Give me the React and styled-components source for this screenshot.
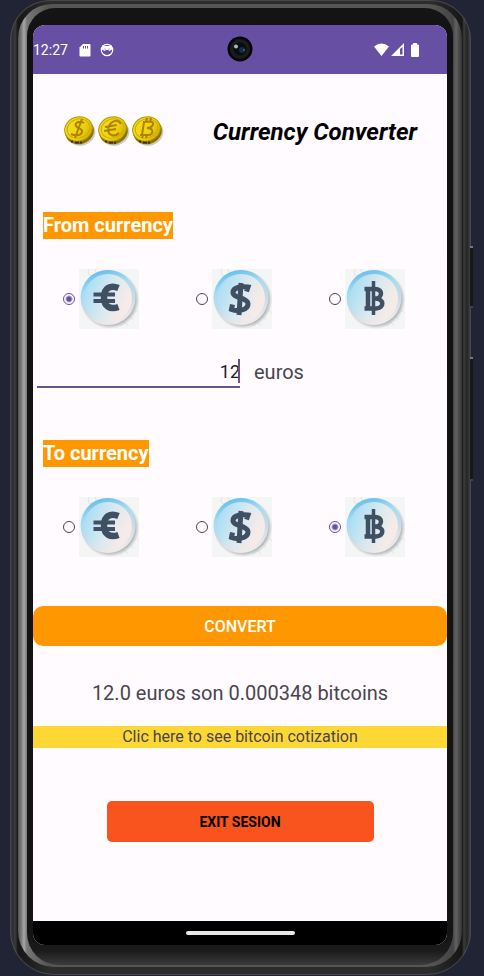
import React, { useState } from "react";
import styled, { createGlobalStyle } from "styled-components";

const GlobalStyle = createGlobalStyle`
  * { box-sizing: border-box; }
  body {
    margin: 0;
    background: #202434;
    font-family: Roboto, "Liberation Sans", sans-serif;
    color: #49454f;
  }
`;

const Desk = styled.main`
  padding: 0 13px 0 10px;
`;

const Shell = styled.div`
  position: relative;
  padding: 4px 9px 8px 8px;
  border-radius: 40px 40px 44px 44px;
  background: linear-gradient(90deg, #3a3a3a 0, #2e2e2e 3px, #3c3c3c 5px, #161616 8px, #2c2c2c 40px, #2c2c2c calc(100% - 40px), #161616 calc(100% - 9px), #3c3c3c calc(100% - 7px), #242424 calc(100% - 4px), #484848 100%);
  box-shadow: inset 0 0 1px 1px #4b4b4b;
`;

const Rail = styled.div`
  padding: 4px 9px 2px 9px;
  border-radius: 34px 34px 36px 36px;
  background: linear-gradient(90deg, #555 0, #777 3px, #a6a6a6 6px, #777 9px, #555 30px, #555 calc(100% - 30px), #444 calc(100% - 9px), #626262 calc(100% - 6px), #333 100%);
`;

const Bezel = styled.div`
  padding: 17px 6px 20px;
  border-radius: 28px 28px 32px 32px;
  background: linear-gradient(#151515 0, #111 30px, #141414 calc(100% - 30px), #1b1b1b calc(100% - 14px), #3b3b3b 100%);
`;

const Screen = styled.div`
  overflow: hidden;
  border-radius: 12px;
  background: #fffbff;
`;

const SideKey = styled.span`
  position: absolute;
  right: -2px;
  top: ${(p) => p.$top}px;
  width: 3px;
  height: ${(p) => p.$height}px;
  background: #171717;
  border-top: 2px solid #777;
  border-bottom: 2px solid #444;
`;

const StatusBar = styled.header`
  position: relative;
  display: flex;
  align-items: center;
  gap: 11px;
  height: 49px;
  padding-right: 27px;
  background: #6750a4;
  color: #fff;
  font-size: 14px;
`;

const StatusIcons = styled.div`
  display: flex;
  align-items: center;
  gap: ${(p) => p.$gap}px;
  margin-left: ${(p) => (p.$end ? "auto" : "0")};
`;

const Camera = styled.span`
  position: absolute;
  left: 50%;
  top: 11px;
  width: 26px;
  height: 26px;
  margin-left: -13px;
`;

const AppBar = styled.div`
  display: flex;
  align-items: center;
  justify-content: space-between;
  height: 116px;
  padding: 0 30px;
`;

const Title = styled.h1`
  margin: 0;
  color: #000;
  font-size: 24px;
  line-height: 28px;
  font-style: italic;
  font-weight: 700;
`;

const Group = styled.fieldset`
  display: block;
  min-width: 0;
  margin: 0;
  margin-top: ${(p) => p.$space}px;
  padding: 0;
  border: 0;
`;

const Legend = styled.legend`
  margin-left: 10px;
  padding: 0;
  background: #ff9800;
  color: #fff;
  font-size: 20px;
  line-height: 27px;
  font-weight: 700;
`;

const Choices = styled.div`
  display: flex;
  justify-content: space-between;
  padding: 30px 42px 0 30px;
`;

const Choice = styled.label`
  display: flex;
  align-items: center;
  gap: 4px;
  cursor: pointer;

  svg { display: block; }
`;

const Radio = styled.input`
  appearance: none;
  width: 12px;
  height: 12px;
  margin: 0;
  border: 1px solid #49454f;
  border-radius: 50%;

  &:checked {
    border-color: #6750a4;
    background: radial-gradient(circle, #6750a4 0, #6750a4 2px, transparent 4px);
  }
`;

const AmountRow = styled.div`
  display: flex;
  align-items: center;
  gap: 14px;
  height: 60px;
  margin-top: 13px;
  padding-left: 4px;
`;

const AmountBox = styled.div`
  position: relative;
  flex: 0 1 203px;
  border-bottom: 2px solid #65558f;
`;

const AmountInput = styled.input`
  display: block;
  width: 100%;
  height: 30px;
  padding: 0;
  border: 0;
  outline: 0;
  background: none;
  color: #1c1b1f;
  font: 18px Roboto, "Liberation Sans", sans-serif;
  text-align: right;
`;

const Caret = styled.span`
  position: absolute;
  right: 0;
  top: 3px;
  width: 2px;
  height: 24px;
  background: #65558f;
`;

const Unit = styled.label`
  font-size: 20px;
  line-height: 28px;
`;

const ConvertButton = styled.button`
  display: block;
  width: 100%;
  height: 40px;
  margin-top: 49px;
  border: 0;
  border-radius: 10px;
  background: #ff9800;
  color: #fff;
  font: 500 16px Roboto, "Liberation Sans", sans-serif;
`;

const Result = styled.output`
  display: block;
  padding: 33px 0 19px;
  font-size: 20px;
  line-height: 28px;
  text-align: center;
`;

const QuoteLink = styled.a`
  display: block;
  background: #fdd835;
  color: #49454f;
  font-size: 16px;
  line-height: 22px;
  text-align: center;
  text-decoration: none;
`;

const ExitArea = styled.div`
  display: flex;
  justify-content: center;
  padding: 53px 0 79px;
`;

const ExitButton = styled.button`
  width: 267px;
  height: 41px;
  border: 0;
  border-radius: 5px;
  background: #f9531e;
  color: #000;
  font: 700 14px Roboto, "Liberation Sans", sans-serif;
`;

const NavBar = styled.footer`
  display: flex;
  justify-content: center;
  height: 24px;
  padding-top: 10px;
  background: #000;
`;

const HomeHandle = styled.span`
  width: 109px;
  height: 4px;
  border-radius: 2px;
  background: #e8e8e8;
`;

const SharedPaints = styled.svg`
  position: absolute;
  width: 0;
  height: 0;
`;

const CURRENCIES = ["euro", "dollar", "bitcoin"];

function BadgeDefs() {
  return (
    <SharedPaints aria-hidden="true">
      <defs>
        <linearGradient id="face" x1="0" y1="0.3" x2="1" y2="0.7">
          <stop offset="0.05" stopColor="#acdff5" />
          <stop offset="0.5" stopColor="#dbe9f0" />
          <stop offset="0.85" stopColor="#f6ebe7" />
        </linearGradient>
        <linearGradient id="rim" x1="0.35" y1="0" x2="0.65" y2="1">
          <stop offset="0" stopColor="#67bde8" />
          <stop offset="0.3" stopColor="#a4dcf4" />
          <stop offset="0.65" stopColor="#cbdce7" />
          <stop offset="1" stopColor="#f8ece8" />
        </linearGradient>
        <radialGradient id="shade">
          <stop offset="0.84" stopColor="#8a9299" stopOpacity="0.7" />
          <stop offset="1" stopColor="#a8adb1" stopOpacity="0" />
        </radialGradient>
        <linearGradient id="gold" x1="0" y1="0" x2="1" y2="1">
          <stop offset="0" stopColor="#f5e32a" />
          <stop offset="0.6" stopColor="#ecd00c" />
          <stop offset="1" stopColor="#c9a400" />
        </linearGradient>
      </defs>
    </SharedPaints>
  );
}

function CurrencyBadge({ kind }) {
  return (
    <svg width="60" height="60" viewBox="0 0 60 60" aria-hidden="true">
      <rect width="60" height="60" fill="#f4f5f5" />
      <g fill="none" stroke="#e3e5e6">
        <circle cx="13" cy="3" r="4" />
        <path d="M41 57l5-4 3 4M47 51l4-4 3 4M53 45l4-4 3 3" />
      </g>
      <circle cx="31" cy="30.5" r="29.5" fill="url(#shade)" />
      <circle cx="29" cy="28.5" r="27.5" fill="url(#rim)" />
      <circle cx="29" cy="29" r="24" fill="url(#face)" />
      {kind === "euro" && (
        <g fill="none" stroke="#3e5062">
          <path d="M39.5 19C31 15.500 25 19.500 25 28.500S31 41 39.500 38" strokeWidth="6.500" />
          <path d="M14.500 25.500h21.500M14.500 32h21.500" strokeWidth="4" />
        </g>
      )}
      {kind === "dollar" && (
        <g fill="none" stroke="#3e5062">
          <path d="M34.500 22.500L36 18C29 17 21 18.500 21 23.500C21 29.500 36 28.500 36 35C36 41 26 43 19.500 40.500L20.500 35.500" strokeWidth="5" />
          <path d="M29 14l-2 32" strokeWidth="5" />
        </g>
      )}
      {kind === "bitcoin" && (
        <g fill="none" stroke="#3e5062">
          <path d="M19.500 20H30C38.500 20 37.500 29.500 30 29.500C39.500 29.500 39.500 39.500 31 39.500H19.500M23 20v20" strokeWidth="4.500" />
          <path d="M28.500 12v34" strokeWidth="3.500" />
        </g>
      )}
    </svg>
  );
}

function Coins() {
  return (
    <svg width="102" height="36" viewBox="0 0 102 36" role="img" aria-label="Gold coins">
      {["dollar", "euro", "bitcoin"].map((kind, i) => (
        <g key={kind} transform={`translate(${i * 34} 0)`}>
          <ellipse cx="18" cy="19" rx="14.5" ry="12.5" fill="#ccc8c1" transform="rotate(-18 18 19)" />
          <ellipse cx="16.5" cy="17.5" rx="14.5" ry="12.5" fill="#8a7000" transform="rotate(-18 16.500 17.500)" />
          <ellipse cx="15.5" cy="15" rx="14" ry="12" fill="url(#gold)" stroke="#b49600" transform="rotate(-18 15.500 15)" />
          <ellipse cx="15.500" cy="14.500" rx="11.500" ry="9.500" fill="none" stroke="#cfae00" transform="rotate(-18 15.500 14.500)" />
          <path d="M8 27.500h2m2 1h4m1 0h2" stroke="#3f3200" strokeWidth="2" />
          <g fill="none" stroke="#af8104" strokeWidth="2">
            {kind === "dollar" && (
              <path d="M21 9C17 6 11 9 13 12C15 15 20 14 19 18C18 22 12 22 8 20M19 5L12 24" />
            )}
            {kind === "euro" && (
              <path d="M24 10C21 4 13 7 11.500 14C10 21 17 24 22 19M8 13l12-2M7 17l12-2" />
            )}
            {kind === "bitcoin" && (
              <path d="M12 8L20 7.500C24 8.500 22 14 16 14C23 14 23 21 17 21L9 21M13 8L11 21M16 4l-1 4M20 4l-1 4M12 21l-1 3M16 21l-1 3" />
            )}
          </g>
        </g>
      ))}
    </svg>
  );
}

function CameraLens() {
  return (
    <Camera>
      <svg width="26" height="26" viewBox="0 0 26 26" aria-hidden="true">
        <circle cx="13" cy="13" r="12.500" fill="#060606" />
        <circle cx="13" cy="13" r="10" fill="#1b1c1d" />
        <circle cx="13" cy="13" r="6.500" fill="#090c10" />
        <circle cx="15" cy="14" r="3" fill="#152c42" />
        <circle cx="9" cy="10.500" r="2" fill="#a6bec0" />
        <circle cx="17" cy="14" r="1" fill="#286a9e" />
      </svg>
    </Camera>
  );
}

function CurrencyGroup({ legend, name, space, value, onChange }) {
  return (
    <Group $space={space}>
      <Legend>{legend}</Legend>
      <Choices>
        {CURRENCIES.map((kind) => (
          <Choice key={kind}>
            <Radio
              type="radio"
              name={name}
              aria-label={kind}
              checked={value === kind}
              onChange={() => onChange(kind)}
            />
            <CurrencyBadge kind={kind} />
          </Choice>
        ))}
      </Choices>
    </Group>
  );
}

export default function App() {
  const [from, setFrom] = useState("euro");
  const [to, setTo] = useState("bitcoin");
  const [amount, setAmount] = useState("12");

  return (
    <Desk>
      <GlobalStyle />
      <BadgeDefs />
      <Shell>
        <SideKey $top={246} $height={62} />
        <SideKey $top={357} $height={124} />
        <Rail>
          <Bezel>
            <Screen>
              <StatusBar>
                <span>12:27</span>
                <StatusIcons $gap={9}>
                  <svg width="12" height="14" viewBox="0 0 12 14" aria-hidden="true">
                    <path fill="#fff" d="M4 1h6.500q1 0 1 1v10.500q0 1-1 1h-9q-1 0-1-1V4.500z" />
                    <path stroke="#6750a4" d="M4.500 3v2.500M6.500 3v2.500M8.500 3v2.500" />
                  </svg>
                  <svg width="14" height="14" viewBox="0 0 14 14" aria-hidden="true">
                    <circle cx="7" cy="7" r="5.700" fill="none" stroke="#fff" strokeWidth="1.200" />
                    <path fill="#fff" d="M2 2.500l3 .5h4l3-.5v4L9.500 8 8 7H6L4.500 8 2 6.500z" />
                    <circle cx="5" cy="6" r=".6" fill="#6750a4" />
                    <circle cx="9" cy="6" r=".6" fill="#6750a4" />
                  </svg>
                </StatusIcons>
                <CameraLens />
                <StatusIcons $gap={2} $end>
                  <svg width="15" height="13" viewBox="0 0 15 13" aria-hidden="true">
                    <path fill="#fff" d="M0 3.500Q7.500-2.500 15 3.500L7.500 13z" />
                  </svg>
                  <svg width="13" height="13" viewBox="0 0 13 13" aria-hidden="true">
                    <path fill="#fff" fillRule="evenodd" d="M13 0v13H0zM9 6v5.500h2.500V4z" />
                  </svg>
                  <svg width="14" height="14" viewBox="0 0 14 14" aria-hidden="true">
                    <path fill="#fff" d="M7 0h4v1.500h1q1 0 1 1V13q0 1-1 1H6q-1 0-1-1V2.500q0-1 1-1h1z" />
                  </svg>
                </StatusIcons>
              </StatusBar>

              <AppBar>
                <Coins />
                <Title>Currency Converter</Title>
              </AppBar>

              <CurrencyGroup legend="From currency" name="from" space={22} value={from} onChange={setFrom} />

              <AmountRow>
                <AmountBox>
                  <AmountInput
                    id="amount"
                    inputMode="decimal"
                    value={amount}
                    onChange={(e) => setAmount(e.target.value)}
                  />
                  <Caret />
                </AmountBox>
                <Unit htmlFor="amount">euros</Unit>
              </AmountRow>

              <CurrencyGroup legend="To currency" name="to" space={38} value={to} onChange={setTo} />

              <ConvertButton type="button">CONVERT</ConvertButton>
              <Result htmlFor="amount">12.0 euros son 0.000348 bitcoins</Result>
              <QuoteLink href="#cotization">Clic here to see bitcoin cotization</QuoteLink>
              <ExitArea>
                <ExitButton type="button">EXIT SESION</ExitButton>
              </ExitArea>
              <NavBar>
                <HomeHandle />
              </NavBar>
            </Screen>
          </Bezel>
        </Rail>
      </Shell>
    </Desk>
  );
}
